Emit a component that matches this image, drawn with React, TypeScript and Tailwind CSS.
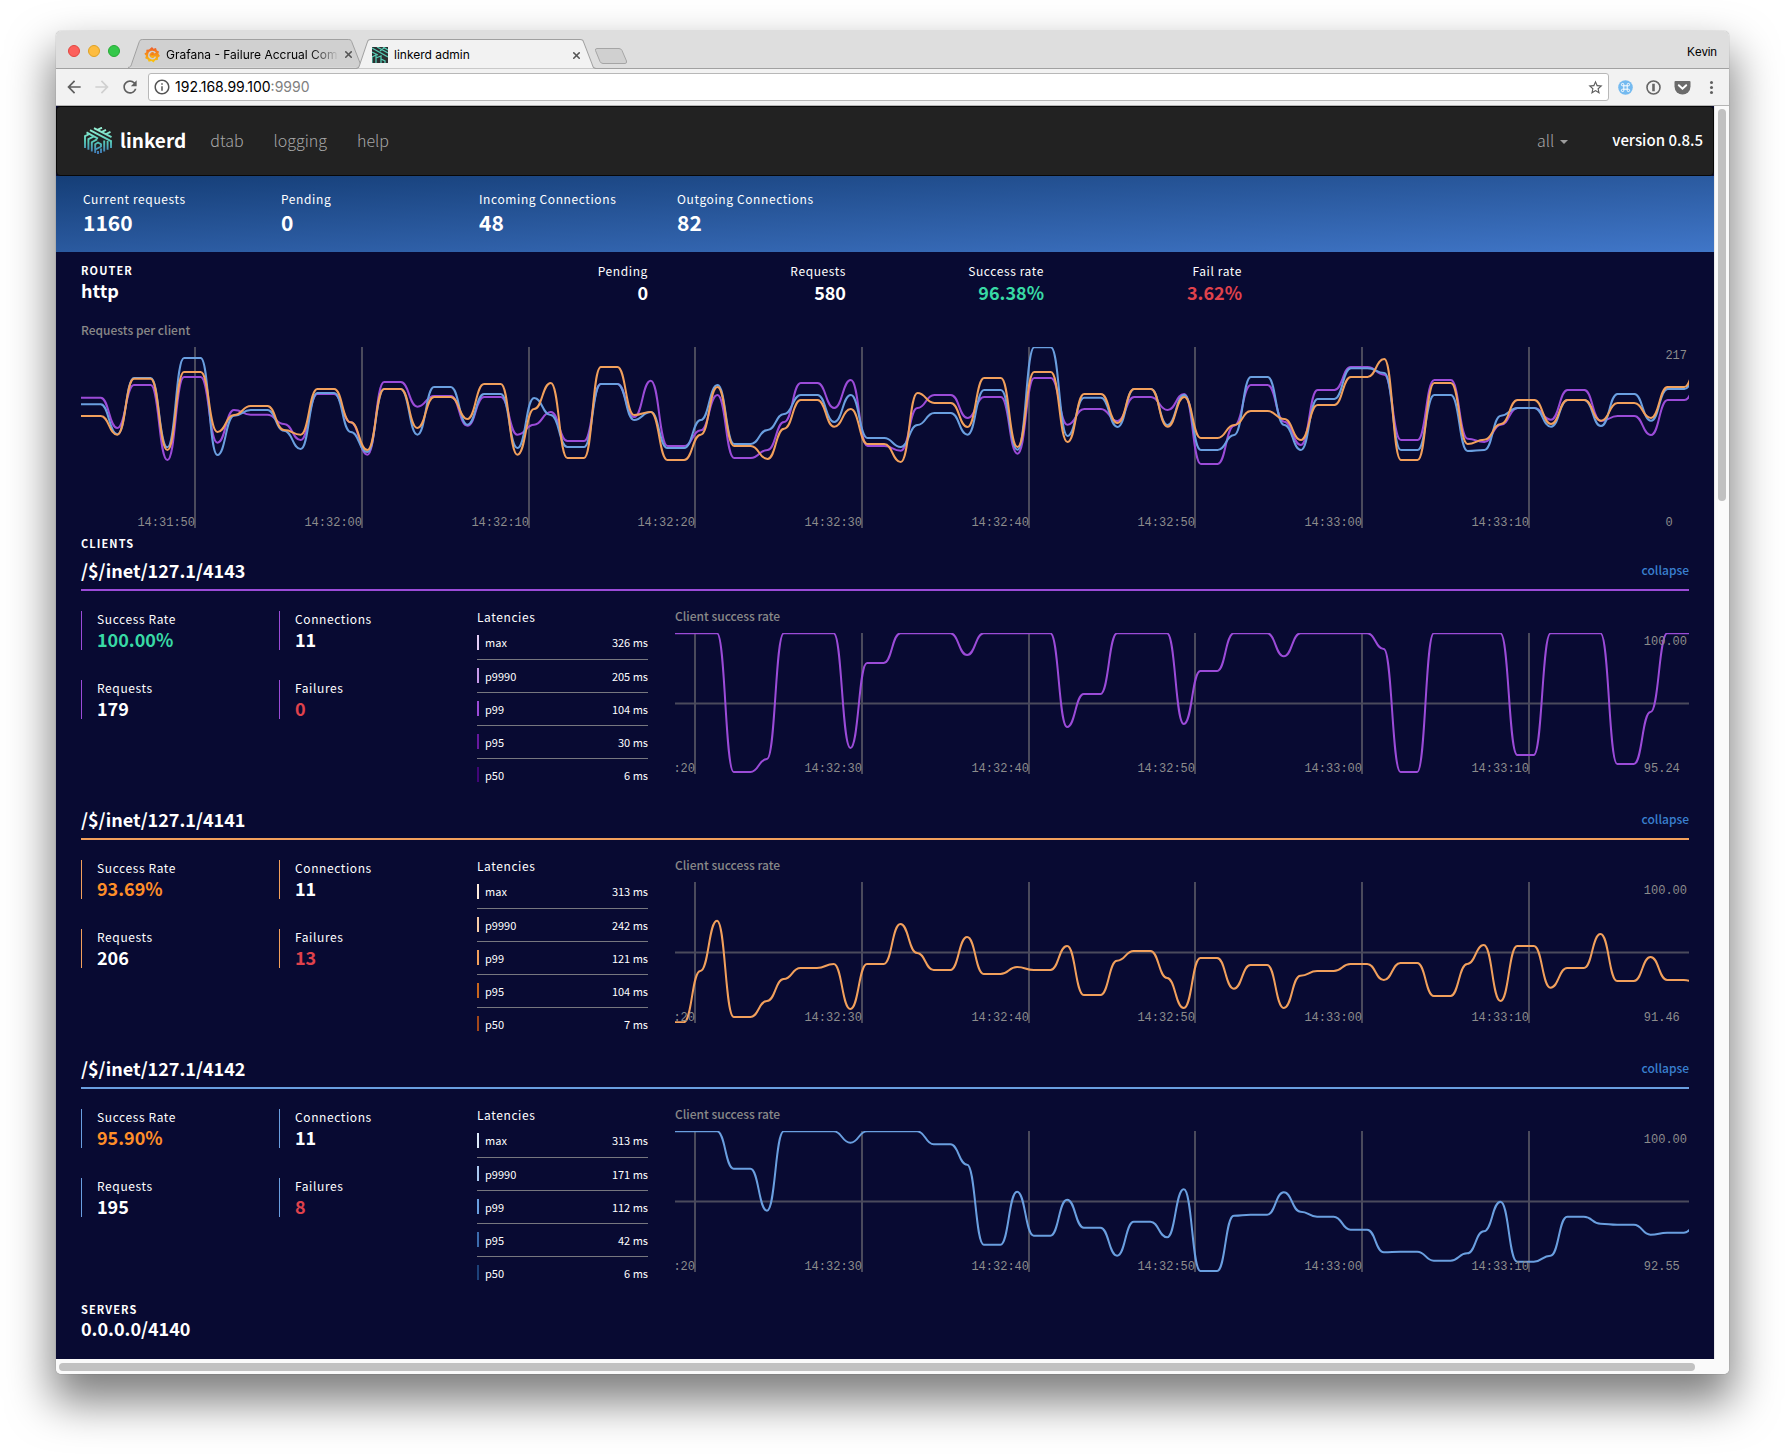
import React from "react";
import { X } from "lucide-react";
import { MdArrowBack, MdArrowForward, MdInfoOutline, MdRefresh, MdStarBorder } from "react-icons/md";

const SANS = "font-['Noto_Sans_CJK_SC',sans-serif]";

const STEP = 16.67;

type Line = { color: string; depths: number[] };

/** Builds a smooth path through one sample per second. */
function smoothPath(depths: number[], startX: number) {
  let d = "";
  depths.forEach((y, i) => {
    const x = startX + i * STEP;
    if (i === 0) {
      d = `M${(x - STEP).toFixed(1)} ${y}H${x.toFixed(1)}`;
      return;
    }
    const mid = (x - STEP / 2).toFixed(1);
    d += `C${mid} ${depths[i - 1]} ${mid} ${y} ${x.toFixed(1)} ${y}`;
  });
  return d;
}

const requestLines: Line[] = [
  {
    color: "#9b4bd8",
    depths: [
      152, 152, 243, 114, 114, 339, 90, 90, 287, 189, 203, 203, 231, 279, 141, 141, 226, 323, 105, 105, 179, 147, 147,
      236, 150, 150, 263, 233, 195, 282, 282, 111, 111, 210, 101, 297, 297, 250, 144, 333, 333, 309, 225, 108, 108,
      183, 99, 297, 297, 311, 183, 144, 144, 213, 150, 150, 320, 93, 93, 233, 186, 186, 222, 150, 150, 189, 141, 351,
      351, 236, 114, 114, 224, 294, 129, 129, 60, 60, 83, 279, 279, 99, 99, 275, 285, 233, 183, 183, 218, 129, 129,
      222, 207, 207, 264, 159, 159, 89,
    ],
  },
  {
    color: "#6a9fe0",
    depths: [
      172, 172, 262, 93, 93, 301, 33, 33, 324, 206, 189, 189, 251, 306, 138, 138, 255, 315, 126, 126, 263, 120, 120,
      233, 141, 141, 303, 153, 204, 300, 300, 111, 111, 219, 195, 303, 303, 219, 114, 291, 291, 249, 201, 144, 144,
      225, 144, 273, 273, 300, 234, 198, 198, 263, 129, 129, 308, 1, 1, 267, 152, 152, 240, 126, 126, 234, 144, 309,
      309, 264, 90, 90, 234, 309, 156, 156, 64, 64, 78, 309, 309, 144, 144, 312, 309, 206, 183, 183, 239, 159, 159,
      237, 141, 141, 221, 126, 126, 49,
    ],
  },
  {
    color: "#f2a05c",
    depths: [
      207, 207, 263, 95, 95, 309, 75, 75, 255, 204, 177, 177, 249, 263, 126, 126, 226, 309, 126, 126, 243, 150, 150,
      216, 111, 111, 323, 186, 108, 333, 333, 60, 60, 204, 195, 339, 339, 263, 120, 297, 297, 336, 245, 159, 159, 239,
      186, 291, 291, 345, 138, 168, 168, 240, 93, 93, 300, 75, 75, 285, 141, 141, 228, 126, 126, 239, 150, 273, 273,
      234, 192, 192, 216, 279, 174, 174, 90, 90, 36, 339, 339, 108, 108, 291, 278, 231, 159, 159, 231, 159, 159, 221,
      168, 168, 213, 120, 120, 19,
    ],
  },
];

const clients = [
  {
    name: "/$/inet/127.1/4143",
    border: "border-[#9b4bd8]",
    success: "100.00%",
    successColor: "text-[#38d9a5]",
    connections: "11",
    requests: "179",
    failures: "0",
    min: "95.24",
    latencies: [
      ["max", "326 ms", "bg-[#e4cdf6]"],
      ["p9990", "205 ms", "bg-[#c79aea]"],
      ["p99", "104 ms", "bg-[#9b4bd8]"],
      ["p95", "30 ms", "bg-[#67189f]"],
      ["p50", "6 ms", "bg-[#410577]"],
    ],
    line: {
      color: "#9b4bd8",
      depths: [
        1, 1, 1, 1, 417, 417, 378, 1, 1, 1, 1, 345, 90, 90, 1, 1, 1, 1, 66, 1, 1, 1, 1, 1, 282, 183, 183, 1, 1, 1, 1,
        273, 114, 114, 1, 1, 1, 70, 1, 1, 1, 1, 1, 48, 417, 417, 1, 1, 1, 1, 1, 366, 366, 1, 1, 1, 1, 393, 393, 237, 1,
        1, 1,
      ],
    },
  },
  {
    name: "/$/inet/127.1/4141",
    border: "border-[#f2a05c]",
    success: "93.69%",
    successColor: "text-[#ff8e29]",
    connections: "11",
    requests: "206",
    failures: "13",
    min: "91.46",
    latencies: [
      ["max", "313 ms", "bg-[#fdebdc]"],
      ["p9990", "242 ms", "bg-[#f8cda8]"],
      ["p99", "121 ms", "bg-[#f2a05c]"],
      ["p95", "104 ms", "bg-[#c9661d]"],
      ["p50", "7 ms", "bg-[#a3471a]"],
    ],
    line: {
      color: "#f2a05c",
      depths: [
        421, 421, 267, 116, 405, 405, 357, 291, 258, 258, 246, 381, 246, 246, 126, 213, 264, 264, 165, 276, 276, 255,
        264, 264, 192, 339, 339, 236, 207, 207, 288, 378, 228, 228, 320, 249, 249, 378, 281, 267, 267, 246, 246, 294,
        243, 243, 342, 342, 246, 189, 357, 192, 192, 317, 258, 258, 156, 297, 297, 225, 294, 294, 306,
      ],
    },
  },
  {
    name: "/$/inet/127.1/4142",
    border: "border-[#6a9fe0]",
    success: "95.90%",
    successColor: "text-[#ff8e29]",
    connections: "11",
    requests: "195",
    failures: "8",
    min: "92.55",
    latencies: [
      ["max", "313 ms", "bg-[#dceafa]"],
      ["p9990", "171 ms", "bg-[#a9c8f0]"],
      ["p99", "112 ms", "bg-[#6a9fe0]"],
      ["p95", "42 ms", "bg-[#3c6cae]"],
      ["p50", "6 ms", "bg-[#1c4179]"],
    ],
    line: {
      color: "#6a9fe0",
      depths: [
        1, 1, 1, 1, 113, 113, 239, 1, 1, 1, 1, 35, 1, 1, 1, 1, 40, 40, 101, 341, 341, 182, 314, 314, 206, 290, 290,
        374, 272, 272, 319, 175, 420, 420, 254, 251, 251, 184, 242, 257, 257, 296, 296, 364, 362, 362, 389, 389, 367,
        301, 212, 392, 392, 374, 257, 257, 278, 281, 281, 311, 305, 305, 270,
      ],
    },
  },
];

type ChartProps = {
  width: number;
  startX: number;
  lines: Line[];
  ticks: [number, string][];
  max: string;
  min: string;
  label: string;
  className: string;
  viewHeight: number;
  midline?: boolean;
};

function Chart({ width, startX, lines, ticks, max, min, label, className, viewHeight, midline }: ChartProps) {
  return (
    <div className={`relative font-['Liberation_Mono',monospace] text-[12px] leading-2.5 text-[#8c8c8c] ${className}`}>
      <svg
        role="img"
        aria-label={label}
        viewBox={`0 0 ${width} ${viewHeight}`}
        preserveAspectRatio="none"
        className="block h-full w-full overflow-hidden"
        fill="none"
      >
        {ticks.map(([x]) => (
          <path key={x} d={`M${x} 0V${viewHeight}`} stroke="#4a4a5c" strokeWidth="2" vectorEffect="non-scaling-stroke" />
        ))}
        {midline && (
          <path
            d={`M0 ${viewHeight / 2}H${width}`}
            stroke="#4a4a5c"
            strokeWidth="2"
            vectorEffect="non-scaling-stroke"
          />
        )}
        {lines.map((line) => (
          <path
            key={line.color}
            d={smoothPath(line.depths, startX)}
            stroke={line.color}
            strokeWidth="2"
            vectorEffect="non-scaling-stroke"
          />
        ))}
      </svg>
      {ticks.map(([x, text]) => (
        <span key={text} className="absolute bottom-0 -translate-x-full" style={{ left: `${(x / width) * 100}%` }}>
          {text}
        </span>
      ))}
      <div className="absolute inset-y-0 right-0.5 flex flex-col items-start justify-between pt-1">
        <span>{max}</span>
        <span>{min}</span>
      </div>
    </div>
  );
}

function Stat({ label, value, color, border }: { label: string; value: string; color: string; border: string }) {
  return (
    <div className={`h-[39px] w-[198px] border-l pl-[15px] ${border}`}>
      <div className="text-[12px] leading-4 tracking-wider">{label}</div>
      <div className={`text-[18px] leading-6 font-bold ${color}`}>{value}</div>
    </div>
  );
}

function Client({ client }: { client: (typeof clients)[number] }) {
  return (
    <section className="mb-[13px]">
      <header className={`flex h-9 items-center justify-between border-b-2 pb-[5px] ${client.border}`}>
        <h3 className="text-[18px] leading-7 font-bold">{client.name}</h3>
        <button type="button" className="text-[12px] font-medium text-[#3a80cf]">
          collapse
        </button>
      </header>
      <div className="flex">
        <div className="grid grid-cols-[198px_198px] content-start gap-y-[30px] pt-5">
          <Stat label="Success Rate" value={client.success} color={client.successColor} border={client.border} />
          <Stat label="Connections" value={client.connections} color="text-white" border={client.border} />
          <Stat label="Requests" value={client.requests} color="text-white" border={client.border} />
          <Stat label="Failures" value={client.failures} color="text-[#e0424c]" border={client.border} />
        </div>
        <div className="w-[198px] shrink-0 pt-[17px] pr-[27px]">
          <table className="w-full border-collapse text-[11px] leading-4">
            <caption className="text-left text-[12px] leading-[18px] tracking-wider">Latencies</caption>
            <tbody>
              {client.latencies.map(([name, value, bar]) => (
                <tr key={name} className="h-[33px] border-b border-[#77777f] last:border-b-0">
                  <th scope="row" className="text-left font-normal">
                    <span className="flex items-center gap-1.5">
                      <span className={`h-[15px] w-0.5 ${bar}`} />
                      {name}
                    </span>
                  </th>
                  <td className="text-right">{value}</td>
                </tr>
              ))}
            </tbody>
          </table>
        </div>
        <div className="min-w-0 flex-1 pt-[17px]">
          <h4 className="mb-[9px] text-[12px] leading-4 font-medium text-[#888]">Client success rate</h4>
          <Chart
            className="h-[141px]"
            width={1014}
            viewHeight={423}
            startX={-8}
            midline
            label="Client success rate"
            lines={[client.line]}
            max="100.00"
            min={client.min}
            ticks={[
              [20, ":20"],
              [187, "14:32:30"],
              [354, "14:32:40"],
              [520, "14:32:50"],
              [687, "14:33:00"],
              [854, "14:33:10"],
            ]}
          />
        </div>
      </div>
    </section>
  );
}

function LinkerdMark({ className }: { className: string }) {
  return (
    <svg viewBox="0 0 28 27" className={className} fill="none" aria-hidden="true">
      <defs>
        <linearGradient id="mark" x1="0" y1="0" x2="0" y2="27" gradientUnits="userSpaceOnUse">
          <stop offset="0" stopColor="#9df5d8" />
          <stop offset="0.55" stopColor="#56c9b8" />
          <stop offset="1" stopColor="#3f74b8" />
        </linearGradient>
      </defs>
      <g stroke="url(#mark)" strokeWidth="1.9">
        <path d="M10 1.200l17.500 9M6 3.200l21.500 11.200M2.500 5.400L14 11.600M14 2.600L18 .6M18 4.800l4-2M22 7l4.500-2.200" />
        <path d="M1 21V9.200L5.500 7M4.400 22.800V12.200L9.500 9.600M7.800 24.500V15.200l5.200-2.800" />
        <path d="M27 13.500V21M23.600 14v8.800M20.200 13.500v11" />
        <path d="M11.200 26v-8.800L14 15.500l3 1.700v2.300l-5.500 3M17 21.500V26M14 27v-3" />
      </g>
    </svg>
  );
}

function TabShape({ fill }: { fill: string }) {
  return (
    <svg viewBox="0 0 240 29" preserveAspectRatio="none" className="absolute inset-0 h-full w-full" aria-hidden="true">
      <path
        d="M0 28.500C3 28 3 27 4 24L11 4C12 1.500 12 .5 15 .5H224C227 .5 227 1.500 228 4L236 24C237 27 237 28 240 28.500"
        fill={fill}
        stroke="#a0a0a0"
      />
    </svg>
  );
}

function BrowserChrome() {
  return (
    <div className="font-['Liberation_Sans',sans-serif] text-black">
      <div className="flex h-[38px] items-end rounded-t-[5px] border-b border-[#a1a1a1] bg-[#dedede] pr-3">
        <div className="flex gap-2 self-center pt-0.5 pl-3">
          <button type="button" aria-label="Close" className="size-3 rounded-full border border-[#e2463f] bg-[#fc605c]" />
          <button type="button" aria-label="Minimize" className="size-3 rounded-full border border-[#dfa123] bg-[#fdbc40]" />
          <button type="button" aria-label="Zoom" className="size-3 rounded-full border border-[#27aa35] bg-[#34c84a]" />
        </div>
        <div className="relative ml-2 flex h-[29px] w-[236px] items-center pt-0.5 pr-2.5 pl-4">
          <TabShape fill="#d0d0d0" />
          <svg viewBox="0 0 16 16" className="relative size-4 shrink-0" aria-hidden="true">
            <defs>
              <linearGradient id="flame" x1="0" y1="0" x2="0" y2="1">
                <stop offset="0" stopColor="#f05a28" />
                <stop offset="1" stopColor="#fbca0a" />
              </linearGradient>
            </defs>
            <path
              fill="url(#flame)"
              fillRule="evenodd"
              d="M8 0l1.500 1.800L12 1l.8 2.500L15 4.500l-.6 2.200L16 9l-2 1.500-.2 2.500-2.600.2L9.500 15.500 7.500 14l-2.800.8-.9-2.300L1.200 11.200 2 8.800.3 6.800l2-1.500L2.400 2.800 5 2.600zM8.500 3.800a4.300 4.300 0 1 0 3.800 6l-1.600-.4a2.700 2.700 0 1 1-.2-3l1.500-.8a4.300 4.300 0 0 0-3.500-1.800z"
            />
            <circle cx="8.400" cy="8.200" r="1.500" fill="url(#flame)" />
          </svg>
          <span className="relative ml-1.5 flex-1 overflow-hidden bg-gradient-to-r from-black from-80% to-[#d0d0d0] bg-clip-text font-['Inter',sans-serif] text-[12px] leading-4 whitespace-nowrap text-transparent">
            Grafana - Failure Accrual Com
          </span>
          <button type="button" aria-label="Close tab" className="relative ml-1">
            <X size={11} strokeWidth={3.5} color="#555" />
          </button>
        </div>
        <div className="relative -mb-px -ml-2 flex h-[30px] w-[240px] items-center pt-0.5 pr-3.5 pl-4">
          <TabShape fill="#f2f2f2" />
          <svg viewBox="0 0 16 16" className="relative size-4 shrink-0" aria-hidden="true">
            <rect width="16" height="16" fill="#2c2f31" />
            <path
              d="M0 1l16 9M5 0l11 6M11 0l5 3M0 5l6 3M0 9v7M0 10l4-2v8M4 11l5-2v7M9 12l4 2v2M8 4l4-3"
              stroke="#56c9b2"
              strokeWidth="1.300"
              fill="none"
            />
          </svg>
          <span className="relative ml-1.5 flex-1 font-['Inter',sans-serif] text-[12px] leading-4">linkerd admin</span>
          <button type="button" aria-label="Close tab" className="relative">
            <X size={11} strokeWidth={3.5} color="#555" />
          </button>
        </div>
        <button type="button" aria-label="New tab" className="-ml-0.5 mb-1">
          <svg viewBox="0 0 34 16" className="h-4 w-[34px]" aria-hidden="true">
            <path
              d="M1.500 2.500Q1 .5 3 .5H25Q27 .5 28 2.500L32.500 13Q33 15.500 31 15.500H9Q7 15.500 6 13.500Z"
              fill="#d0d0d0"
              stroke="#a5a5a5"
            />
          </svg>
        </button>
        <span className="ml-auto pb-2 text-[12px] leading-4">Kevin</span>
      </div>
      <div className="flex h-[37px] items-center border-b border-[#b5b5b5] bg-[#f2f2f2] pr-[11px] pl-2">
        <div className="mr-2 flex w-[76px] items-center justify-between">
          <button type="button" aria-label="Back">
            <MdArrowBack size={20} color="#5f5f5f" />
          </button>
          <button type="button" aria-label="Forward">
            <MdArrowForward size={20} color="#d0d0d0" />
          </button>
          <button type="button" aria-label="Reload">
            <MdRefresh size={20} color="#5f5f5f" />
          </button>
        </div>
        <div className="flex h-7 flex-1 items-center rounded-[3px] border border-[#b8b8b8] bg-white px-1">
          <MdInfoOutline size={18} color="#555" />
          <a href="#top" className="ml-1 flex-1 font-['Inter',sans-serif] text-[14px] leading-5 text-black">
            192.168.99.100<span className="text-[#808080]">:9990</span>
          </a>
          <button type="button" aria-label="Bookmark">
            <MdStarBorder size={17} color="#5f5f5f" />
          </button>
        </div>
        <div className="ml-[9px] flex items-center gap-[13px]">
          <button type="button" aria-label="Shortcuts">
            <svg viewBox="0 0 15 15" className="size-[15px]" fill="none" aria-hidden="true">
              <circle cx="7.500" cy="7.500" r="7.300" fill="#74baf0" />
              <path
                d="M5.800 5.800h3.400v3.400H5.800zM5.800 5.800H4.600A1.200 1.200 0 1 1 5.800 4.600zM9.200 5.800V4.600a1.200 1.200 0 1 1 1.200 1.200zM5.800 9.200v1.200A1.200 1.200 0 1 1 4.600 9.200zM9.200 9.200h1.200a1.200 1.200 0 1 1-1.200 1.200z"
                stroke="#fff"
              />
            </svg>
          </button>
          <button type="button" aria-label="Password manager">
            <svg viewBox="0 0 15 15" className="size-[15px]" fill="none" aria-hidden="true">
              <circle cx="7.500" cy="7.500" r="6.500" stroke="#666" strokeWidth="1.600" />
              <path d="M7.500 3.800v7.400" stroke="#666" strokeWidth="2.600" />
            </svg>
          </button>
          <button type="button" aria-label="Pocket">
            <svg viewBox="0 0 17 15" className="h-[15px] w-[17px]" fill="none" aria-hidden="true">
              <path d="M1.500 1h14Q16.500 1 16.500 2v4.500a8 8 0 0 1-16 0V2Q.5 1 1.500 1z" fill="#6b6b6b" />
              <path d="M4.800 5.200l3.700 3.500 3.700-3.500" stroke="#fff" strokeWidth="2" strokeLinecap="round" />
            </svg>
          </button>
          <button type="button" aria-label="Menu" className="flex w-3.5 flex-col items-center gap-0.5">
            <span className="size-[3px] rounded-full bg-[#606060]" />
            <span className="size-[3px] rounded-full bg-[#606060]" />
            <span className="size-[3px] rounded-full bg-[#606060]" />
          </button>
        </div>
      </div>
    </div>
  );
}

function Summary({ label, value }: { label: string; value: string }) {
  return (
    <div className="w-[198px]">
      <div className="text-[12px] leading-5 tracking-wider">{label}</div>
      <div className="text-[21px] leading-[26px] font-bold">{value}</div>
    </div>
  );
}

function RouterMetric({ label, value, color }: { label: string; value: string; color: string }) {
  return (
    <div className="w-[198px] text-right">
      <div className="text-[12px] leading-[18px] tracking-wider">{label}</div>
      <div className={`text-[18px] leading-6 font-bold ${color}`}>{value}</div>
    </div>
  );
}

export default function App() {
  return (
    <div className="min-h-screen bg-white px-14 pt-[31px] pb-20">
      <div className="overflow-hidden rounded-[5px] bg-white shadow-[0_0_1px_rgba(0,0,0,0.5),0_24px_44px_4px_rgba(0,0,0,0.5)]">
        <BrowserChrome />
        <div className="flex">
          <main id="top" className={`${SANS} min-w-0 flex-1 bg-[#080a32] text-white`}>
            <nav className="flex h-[70px] items-center rounded border border-[#080808] bg-[#222] pr-2.5 pb-0.5 pl-[27px] text-[16px] leading-6 font-light text-[#a8a8a8]">
              <a href="#home" className="flex items-center gap-2 text-[19px] font-bold text-white">
                <LinkerdMark className="h-[27px] w-7" />
                linkerd
              </a>
              <a href="#dtab" className="ml-6">
                dtab
              </a>
              <a href="#logging" className="ml-[30px]">
                logging
              </a>
              <a href="#help" className="ml-[30px]">
                help
              </a>
              <button type="button" className="ml-auto flex items-center gap-1.5">
                all
                <span className="mt-1 border-x-4 border-t-4 border-x-transparent border-t-[#9d9d9d]" />
              </button>
              <span className="ml-11 text-[15px] font-medium text-white">version 0.8.5</span>
            </nav>
            <div className="flex h-[76px] bg-[linear-gradient(to_bottom_right,#153e77,#4076c8)] pt-[13px] pl-[27px]">
              <Summary label="Current requests" value="1160" />
              <Summary label="Pending" value="0" />
              <Summary label="Incoming Connections" value="48" />
              <Summary label="Outgoing Connections" value="82" />
            </div>
            <div className="px-[25px] pb-[19px]">
              <div className="flex h-[69px] pt-2.5">
                <div className="w-[369px]">
                  <h2 className="text-[11px] leading-4 font-bold tracking-widest">ROUTER</h2>
                  <div className="text-[18px] leading-6 font-bold">http</div>
                </div>
                <RouterMetric label="Pending" value="0" color="text-white" />
                <RouterMetric label="Requests" value="580" color="text-white" />
                <RouterMetric label="Success rate" value="96.38%" color="text-[#38d9a5]" />
                <RouterMetric label="Fail rate" value="3.62%" color="text-[#e0424c]" />
              </div>
              <h4 className="mb-[9px] text-[12px] leading-[17px] font-medium text-[#888]">Requests per client</h4>
              <Chart
                className="h-[181px]"
                width={1608}
                viewHeight={543}
                startX={3}
                label="Requests per client"
                lines={requestLines}
                max="217"
                min="0"
                ticks={[
                  [114, "14:31:50"],
                  [281, "14:32:00"],
                  [448, "14:32:10"],
                  [614, "14:32:20"],
                  [781, "14:32:30"],
                  [948, "14:32:40"],
                  [1114, "14:32:50"],
                  [1281, "14:33:00"],
                  [1448, "14:33:10"],
                ]}
              />
              <h2 className="h-[27px] pt-1.5 text-[11px] leading-[18px] font-bold tracking-widest">CLIENTS</h2>
              {clients.map((client) => (
                <Client key={client.name} client={client} />
              ))}
              <h2 className="text-[11px] leading-[14px] font-bold tracking-widest">SERVERS</h2>
              <div className="text-[18px] leading-6 font-bold">0.0.0.0/4140</div>
            </div>
          </main>
          <div className="w-[15px] border-l border-[#e8e8e8] bg-[#fafafa] px-[3px] pt-[3px]">
            <div className="h-[392px] rounded-full bg-[#c1c1c1]" />
          </div>
        </div>
        <div className="h-[15px] bg-[#fafafa] pt-1 pr-[34px] pl-[3px]">
          <div className="h-2 rounded-full bg-[#c1c1c1]" />
        </div>
      </div>
    </div>
  );
}
